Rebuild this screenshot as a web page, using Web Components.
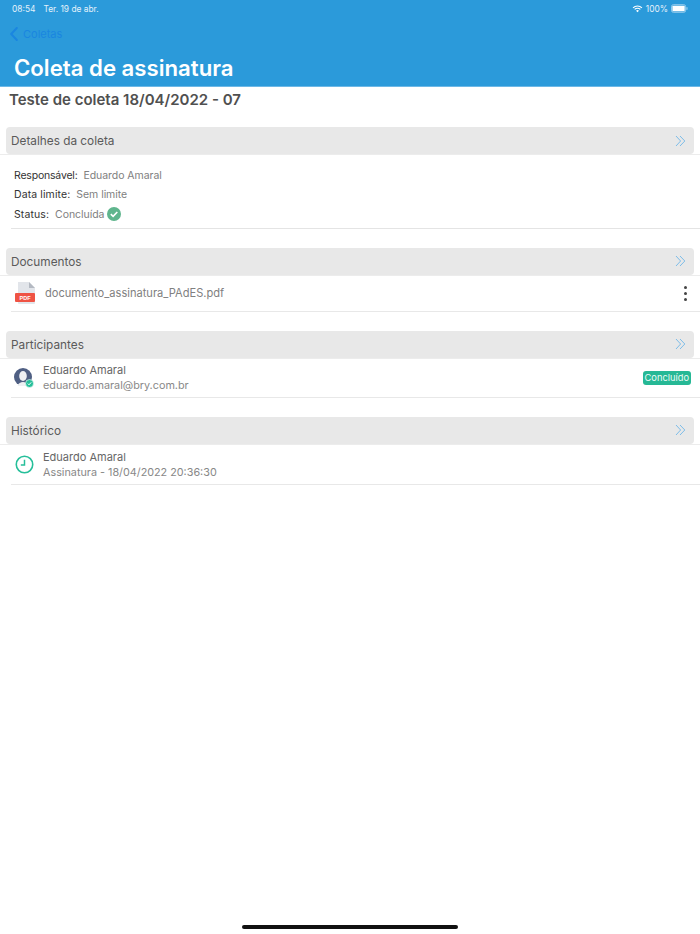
<!DOCTYPE html>
<html lang="pt">
<head>
<meta charset="utf-8">
<title>Coleta de assinatura</title>
<style>
  html, body { margin: 0; padding: 0; background: #fff; }
  body { width: 700px; height: 934px; overflow: hidden; font-family: "Inter", "Liberation Sans", sans-serif; position: relative; }
</style>
</head>
<body>
<app-header back="Coletas" title-text="Coleta de assinatura"></app-header>
<page-title>Teste de coleta 18/04/2022 - 07</page-title>

<collapse-section heading="Detalhes da coleta" style="margin-top:15px">
  <details-block></details-block>
</collapse-section>

<collapse-section heading="Documentos" style="margin-top:19px">
  <doc-row name="documento_assinatura_PAdES.pdf"></doc-row>
</collapse-section>

<collapse-section heading="Participantes" style="margin-top:19px">
  <person-row name="Eduardo Amaral" sub="eduardo.amaral@bry.com.br" kind="user" badge="Concluído"></person-row>
</collapse-section>

<collapse-section heading="Histórico" style="margin-top:19px">
  <person-row name="Eduardo Amaral" sub="Assinatura - 18/04/2022 20:36:30" kind="clock" style="height:39px"></person-row>
</collapse-section>

<home-bar></home-bar>

<script>
// header with status bar
class AppHeader extends HTMLElement {
    constructor() {
        super();
        const shadow = this.attachShadow({ mode: 'open' });
        const back = this.getAttribute('back') || '';
        const title = this.getAttribute('title-text') || '';
        shadow.innerHTML = `
        <style>
            :host { display: block; height: 87px; background: #2b9ada; box-sizing: border-box; border-bottom: 1px solid #6db8e6; }
            .status { display: flex; align-items: center; height: 17px; padding: 0 12px 0 12px; color: #e3f1fa; font-size: 8.4px; }
            .status .date { margin-left: 8px; }
            .status .right { margin-left: auto; display: flex; align-items: center; gap: 3px; }
            .nav { display: flex; align-items: center; gap: 5px; height: 20px; margin-top: 7px; padding-left: 10px; color: #1a86e0; font-size: 11px; }
            h1 { margin: 10px 0 0 14px; font-size: 22.2px; line-height: 28px; font-weight: 600; color: #fff; }
        </style>
        <div class="status">
            <span>08:54</span><span class="date">Ter. 19 de abr.</span>
            <span class="right">
                <svg width="11" height="8" viewBox="0 0 12 9"><path d="M1 3.2a7 7 0 0 1 10 0M2.8 5a4.5 4.5 0 0 1 6.4 0" fill="none" stroke="#fff" stroke-width="1.3"/><path d="M4.4 6.4a2.3 2.3 0 0 1 3.2 0L6 8.2z" fill="#fff"/></svg>
                <span>100%</span>
                <svg width="17" height="9" viewBox="0 0 18 9"><rect x=".5" y=".5" width="15" height="8" rx="2" fill="none" stroke="#9fd0ee"/><rect x="1.5" y="1.5" width="13" height="6" rx="1" fill="#fff"/><rect x="16.3" y="3" width="1.2" height="3" rx=".6" fill="#9fd0ee"/></svg>
            </span>
        </div>
        <div class="nav">
            <svg width="8" height="14" viewBox="0 0 8 14"><path d="M6.8 1 1.2 7l5.6 6" fill="none" stroke="#1a86e0" stroke-width="2" stroke-linecap="round" stroke-linejoin="round"/></svg>
            <span>${back}</span>
        </div>
        <h1>${title}</h1>
        `;
    }
}

class PageTitle extends HTMLElement {
    constructor() {
        super();
        const shadow = this.attachShadow({ mode: 'open' });
        shadow.innerHTML = `
        <style>
            :host { display: block; padding: 3px 0 0 9px; height: 22px; font-size: 15px; line-height: 20px; font-weight: 600; color: #505050; }
        </style>
        <slot></slot>
        `;
    }
}

// grey header bar + whatever is slotted below it
class CollapseSection extends HTMLElement {
    constructor() {
        super();
        const shadow = this.attachShadow({ mode: 'open' });
        const heading = this.getAttribute('heading') || '';
        shadow.innerHTML = `
        <style>
            :host { display: block; }
            .bar { display: flex; align-items: center; justify-content: space-between; height: 27px; margin: 0 6px; padding: 0 8px 0 5px; background: #e8e8e8; border-radius: 4px; color: #5a5a5a; font-size: 11.8px; }
            .bar span { padding-top: 1px; }
            .rule { height: 1px; background: #ececec; }
        </style>
        <div class="bar">
            <span>${heading}</span>
            <svg width="11" height="12" viewBox="0 0 11 12"><path d="M1 1l4.6 5L1 11M5 1l4.8 5L5 11" fill="none" stroke="#7dbde8" stroke-width="1"/></svg>
        </div>
        <div class="rule"></div>
        <slot></slot>
        `;
    }
}

class DetailsBlock extends HTMLElement {
    constructor() {
        super();
        const shadow = this.attachShadow({ mode: 'open' });
        shadow.innerHTML = `
        <style>
            :host { display: block; margin: 0 0 0 11px; padding: 11px 0 4px 3px; border-bottom: 1px solid #e4e4e4; font-size: 10.5px; color: #333; }
            .line { display: flex; align-items: center; gap: 6px; height: 19.3px; }
            .lbl { letter-spacing: 0.1px; }
            .val { color: #808080; letter-spacing: -0.05px; }
            svg { margin-left: -3px; }
        </style>
        <div class="line"><span class="lbl" style="letter-spacing:-0.2px">Responsável:</span><span class="val">Eduardo Amaral</span></div>
        <div class="line"><span class="lbl">Data limite:</span><span class="val">Sem limite</span></div>
        <div class="line"><span class="lbl">Status:</span><span class="val">Concluída</span>
            <svg width="14" height="14" viewBox="0 0 14 14"><circle cx="7" cy="7" r="7" fill="#5fb58d"/><path d="M3.8 7.2l2.3 2.2 4.2-4.4" fill="none" stroke="#fff" stroke-width="1.6"/></svg>
        </div>
        `;
    }
}

class DocRow extends HTMLElement {
    constructor() {
        super();
        const shadow = this.attachShadow({ mode: 'open' });
        const name = this.getAttribute('name') || '';
        shadow.innerHTML = `
        <style>
            :host { display: flex; align-items: center; height: 35px; margin-left: 11px; padding: 0 13px 0 4px; border-bottom: 1px solid #e8e8e8; font-size: 11.1px; color: #808080; }
            .name { margin-left: 9px; }
            .more { margin-left: auto; display: flex; flex-direction: column; gap: 3px; }
            .more i { width: 3px; height: 3px; border-radius: 50%; background: #444; }
        </style>
        <svg width="21" height="23" viewBox="0 0 21 23"><path d="M3 0h11l6 6v15a1 1 0 0 1-1 1H4a1 1 0 0 1-1-1z" fill="#e2e5ea"/><path d="M14 0l6 6h-6z" fill="#b4b9c2"/><rect x="0" y="11" width="20" height="9" rx="1" fill="#ef5344"/><text x="10" y="18" text-anchor="middle" font-size="5.5" font-weight="700" fill="#fff" font-family="Liberation Sans">PDF</text></svg>
        <span class="name">${name}</span>
        <span class="more"><i></i><i></i><i></i></span>
        `;
    }
}

class PersonRow extends HTMLElement {
    constructor() {
        super();
        const shadow = this.attachShadow({ mode: 'open' });
        const name = this.getAttribute('name') || '';
        const sub = this.getAttribute('sub') || '';
        const badge = this.getAttribute('badge');
        const icon = this.getAttribute('kind') === 'clock'
            ? `<svg style="margin-left:1px" width="19" height="19" viewBox="0 0 18 18"><circle cx="9" cy="9" r="7.8" fill="none" stroke="#26bf9a" stroke-width="1.5"/><path d="M9 4.5V9.5H5.5" fill="none" stroke="#26bf9a" stroke-width="1.4"/></svg>`
            : `<svg width="20" height="20" viewBox="0 0 20 20"><circle cx="9" cy="9" r="9" fill="#4f5f83"/><ellipse cx="9" cy="8" rx="3.8" ry="5" fill="#eef0f3"/><path d="M3.5 18c1-3 3-4 5.5-4s4.5 1 5.5 4z" fill="#eef0f3"/><circle cx="15.5" cy="15.5" r="4" fill="#26bf9a" stroke="#fff" stroke-width=".6"/><path d="M13.8 15.6l1.2 1.2 2.2-2.4" fill="none" stroke="#fff" stroke-width="1"/></svg>`;
        shadow.innerHTML = `
        <style>
            :host { display: flex; align-items: center; height: 38px; margin-left: 11px; padding: 0 3px 0 3px; border-bottom: 1px solid #e8e8e8; font-size: 10.8px; color: #888; }
            .ic { width: 29px; display: flex; }
            .txt { line-height: 15px; padding-top: 1px; }
            .name { color: #666; font-size: 11px; }
            .badge { margin-left: auto; margin-right: 6px; background: #26b895; color: #e9fbf5; border-radius: 3px; font-size: 9.3px; line-height: 14px; padding: 0 2px; }
        </style>
        <span class="ic">${icon}</span>
        <div class="txt"><div class="name">${name}</div><div>${sub}</div></div>
        ${badge ? `<span class="badge">${badge}</span>` : ''}
        `;
    }
}

class HomeBar extends HTMLElement {
    constructor() {
        super();
        const shadow = this.attachShadow({ mode: 'open' });
        shadow.innerHTML = `
        <style>
            :host { position: absolute; left: 242px; top: 925px; width: 216px; height: 4px; border-radius: 2px; background: #111; }
        </style>
        `;
    }
}

customElements.define('app-header', AppHeader);
customElements.define('page-title', PageTitle);
customElements.define('collapse-section', CollapseSection);
customElements.define('details-block', DetailsBlock);
customElements.define('doc-row', DocRow);
customElements.define('person-row', PersonRow);
customElements.define('home-bar', HomeBar);
</script>
</body>
</html>
